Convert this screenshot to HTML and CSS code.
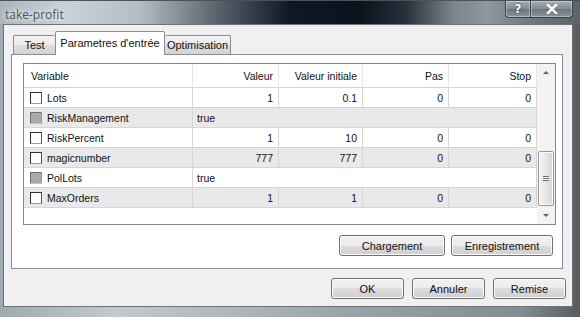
FILE: index.html
```html
<!DOCTYPE html>
<html lang="fr">
<head>
    <meta charset="UTF-8">
    <title>take-profit</title>
    <link rel="stylesheet" href="styles.css">
</head>
<body>
    <div class="window">
        <div class="titlebar">
            <span class="title">take-profit</span>
            <div class="caption-buttons">
                <div class="cap-btn help">?</div>
                <div class="cap-btn close">
                    <svg width="12" height="10" viewBox="0 0 12 10">
                        <path d="M2 1 L10 9 M10 1 L2 9" stroke="#fff" stroke-width="2.4" stroke-linecap="square"/>
                    </svg>
                </div>
            </div>
        </div>

        <div class="client">
            <div class="tabs-area">
                <div class="tabs">
                    <div class="tab first">Test</div>
                    <div class="tab active">Parametres d'entrée</div>
                    <div class="tab last">Optimisation</div>
                </div>

                <div class="panel">
                    <div class="grid">
                        <div class="table">
                            <div class="row head">
                                <div class="cell name">Variable</div>
                                <div class="cell num">Valeur</div>
                                <div class="cell num">Valeur initiale</div>
                                <div class="cell num">Pas</div>
                                <div class="cell num">Stop</div>
                            </div>
                            <div class="row">
                                <div class="cell name"><span class="check"></span>Lots</div>
                                <div class="cell num">1</div>
                                <div class="cell num">0.1</div>
                                <div class="cell num">0</div>
                                <div class="cell num">0</div>
                            </div>
                            <div class="row alt">
                                <div class="cell name"><span class="check off"></span>RiskManagement</div>
                                <div class="cell wide">true</div>
                            </div>
                            <div class="row">
                                <div class="cell name"><span class="check"></span>RiskPercent</div>
                                <div class="cell num">1</div>
                                <div class="cell num">10</div>
                                <div class="cell num">0</div>
                                <div class="cell num">0</div>
                            </div>
                            <div class="row alt">
                                <div class="cell name"><span class="check"></span>magicnumber</div>
                                <div class="cell num">777</div>
                                <div class="cell num">777</div>
                                <div class="cell num">0</div>
                                <div class="cell num">0</div>
                            </div>
                            <div class="row">
                                <div class="cell name"><span class="check off"></span>PolLots</div>
                                <div class="cell wide">true</div>
                            </div>
                            <div class="row alt">
                                <div class="cell name"><span class="check"></span>MaxOrders</div>
                                <div class="cell num">1</div>
                                <div class="cell num">1</div>
                                <div class="cell num">0</div>
                                <div class="cell num">0</div>
                            </div>
                        </div>

                        <div class="scrollbar">
                            <div class="arrow up"></div>
                            <div class="thumb"><span class="grip"></span></div>
                            <div class="arrow down"></div>
                        </div>
                    </div>

                    <div class="panel-buttons">
                        <button class="btn load">Chargement</button>
                        <button class="btn save">Enregistrement</button>
                    </div>
                </div>
            </div>

            <div class="footer">
                <button class="btn">OK</button>
                <button class="btn">Annuler</button>
                <button class="btn">Remise</button>
            </div>
        </div>
    </div>
</body>
</html>
```

FILE: styles.css
```css
* {
    box-sizing: border-box;
}

body {
    margin: 0;
    width: 580px;
    height: 317px;
    overflow: hidden;
    font-family: 'Liberation Sans', Arial, sans-serif;
    font-size: 11px;
    color: #111;
}

.window {
    width: 580px;
    height: 317px;
    display: flex;
    flex-direction: column;
    background: linear-gradient(to right, #9fa9b0 0%, #c2cacf 20%, #9aa3a9 60%, #838c92 90%, #555d63 100%);
}

/* title bar */
.titlebar {
    height: 25px;
    display: flex;
    justify-content: space-between;
    align-items: flex-start;
    background: linear-gradient(to right, #aab5bc 0%, #c9d2d7 12%, #b3bdc3 24%, #56606a 38%, #0e1824 50%, #0a121c 62%, #27313b 70%, #7b848a 78%, #8e979c 84%, #6e777d 92%, #5a6369 100%);
    border-top: 1px solid #4b5258;
}

.title {
    font-family: 'Open Sans', 'Liberation Sans', sans-serif;
    font-size: 12px;
    color: #4b5055;
    padding: 5px 0 0 5px;
    text-shadow: 0 0 4px #f4f6f8, 0 0 7px #eef2f4;
}

.caption-buttons {
    display: flex;
    margin-right: 7px;
}

.cap-btn {
    height: 17px;
    display: flex;
    align-items: center;
    justify-content: center;
    border: 1px solid #3a4248;
    border-top: none;
    background: linear-gradient(#a4adb3, #7f898f 50%, #6a747a 50%, #8a949a);
    box-shadow: inset 0 0 0 1px rgba(255, 255, 255, 0.35);
    color: #fff;
    font-family: 'DejaVu Sans', sans-serif;
    font-weight: bold;
    font-size: 12px;
    text-shadow: 0 0 2px #222;
}

.help {
    width: 26px;
    border-radius: 0 0 0 4px;
}

.close {
    width: 42px;
    border-left: none;
    border-radius: 0 0 4px 0;
}

/* client area */
.client {
    flex: 1;
    margin: 0 7px 10px 3px;
    border: 1px solid #6b7379;
    background: #f0f0f0;
    padding: 6px 6px 7px 7px;
    display: flex;
    flex-direction: column;
}

.tabs-area {
    margin-right: 3px;
}

.tabs {
    display: flex;
    align-items: flex-end;
    height: 23px;
    padding-left: 2px;
    position: relative;
    z-index: 1;
}

.tab {
    height: 19px;
    padding-top: 3px;
    text-align: center;
    white-space: nowrap;
    border: 1px solid #898c95;
    border-bottom: none;
    border-radius: 2px 2px 0 0;
    background: linear-gradient(#f3f3f3, #ebebeb 50%, #dddddd 50%, #d3d3d3);
    font-size: 11px;
}

.tab.first {
    width: 42px;
    border-right: none;
}

.tab.last {
    width: 66px;
    border-left: none;
}

.tab.active {
    width: 110px;
    height: 24px;
    margin-bottom: -1px;
    padding-top: 5px;
    background: #fff;
    font-size: 11px;
}

.panel {
    height: 215px;
    border: 1px solid #898c95;
    background: #fff;
    padding: 8px 6px 11px 11px;
    display: flex;
    flex-direction: column;
}

/* grid */
.grid {
    width: 533px;
    height: 162px;
    border: 1px solid #828790;
    display: flex;
    font-size: 10.5px;
}

.table {
    width: 513px;
}

.row {
    display: grid;
    grid-template-columns: 169px 86px 84px 86px 88px;
    height: 20px;
    background: #fff;
}

.row.alt {
    background: #e9e9e9;
}

.row.head {
    height: 24px;
    background: #fff;
}

.cell {
    display: flex;
    align-items: center;
    border-right: 1px solid #d6d6d6;
    border-bottom: 1px solid #d6d6d6;
    padding: 0 5px;
    white-space: nowrap;
}

.head .cell {
    border-right-color: #e6e6e6;
    border-bottom-color: #d5d5d5;
}

.cell.name {
    padding-left: 6px;
}

.head .cell.name {
    padding-left: 7px;
}

.cell.num {
    justify-content: flex-end;
}

.cell.wide {
    grid-column: 2 / 6;
    padding-left: 4px;
}

.check {
    width: 12px;
    height: 12px;
    margin-right: 5px;
    border: 1px solid #2e2e2e;
    border-right-color: #555;
    border-bottom-color: #9a9a9a;
    background: #fff;
}

.check.off {
    background: #a9a9a9;
    border-color: #6e6e6e #9c9c9c #c4c4c4 #6e6e6e;
}

/* scrollbar */
.scrollbar {
    width: 18px;
    display: flex;
    flex-direction: column;
    background: #f3f3f3;
}

.arrow {
    height: 17px;
    display: flex;
    align-items: center;
    justify-content: center;
}

.arrow::after {
    content: '';
    border-left: 3px solid transparent;
    border-right: 3px solid transparent;
}

.arrow.up::after {
    border-bottom: 3px solid #606060;
}

.arrow.down::after {
    border-top: 3px solid #606060;
}

.thumb {
    height: 56px;
    margin: 70px 1px 1px 1px;
    border: 1px solid #979797;
    border-radius: 2px;
    background: linear-gradient(to right, #f4f4f4, #e6e6e6 50%, #d6d6d6);
    box-shadow: inset 0 0 0 1px #fbfbfb;
    display: flex;
    align-items: center;
    justify-content: center;
}

.grip {
    width: 6px;
    height: 5px;
    border-top: 1px solid #6a6a6a;
    border-bottom: 1px solid #6a6a6a;
    background: linear-gradient(#fff 0, #fff 1px, #6a6a6a 1px, #6a6a6a 2px, #fff 2px);
    background-size: 100% 2px;
    background-position: 0 0;
}

/* buttons */
.btn {
    height: 21px;
    font-family: 'Liberation Sans', Arial, sans-serif;
    font-size: 11px;
    color: #111;
    border: 1px solid #707070;
    border-radius: 3px;
    background: linear-gradient(#f2f2f2, #ebebeb 50%, #dddddd 50%, #cfcfcf);
    box-shadow: inset 0 0 0 1px #fcfcfc;
    padding: 0;
}

.panel-buttons {
    display: flex;
    justify-content: flex-end;
    gap: 6px;
    margin-top: 10px;
    padding-right: 3px;
}

.btn.load {
    width: 106px;
}

.btn.save {
    width: 102px;
}

.footer {
    display: flex;
    justify-content: flex-end;
    gap: 8px;
    margin-top: 9px;
}

.footer .btn {
    width: 73px;
}
```
